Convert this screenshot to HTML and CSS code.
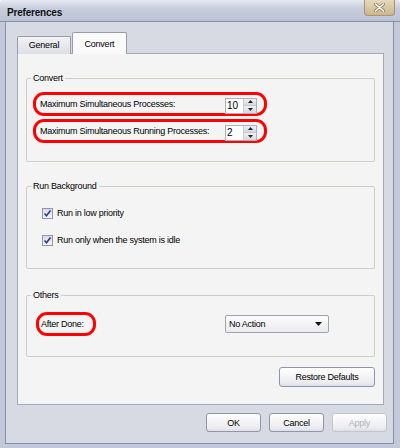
FILE: index.html
```html
<!DOCTYPE html>
<html lang="en">
<head>
    <meta charset="UTF-8">
    <title>Preferences</title>
    <link rel="stylesheet" href="styles.css">
</head>
<body>
    <div class="window">
        <div class="titlebar">
            <span class="title">Preferences</span>
            <button class="close-button">
                <svg width="11" height="9" viewBox="0 0 11 9">
                    <path d="M1.5 1 L9.5 8 M9.5 1 L1.5 8" stroke="#8a7650" stroke-width="3" stroke-linecap="round"/>
                    <path d="M1.5 1 L9.5 8 M9.5 1 L1.5 8" stroke="#ffffff" stroke-width="1.6" stroke-linecap="round"/>
                </svg>
            </button>
        </div>
        <div class="client">
            <div class="tabs">
                <div class="tab">General</div>
                <div class="tab active">Convert</div>
            </div>
            <div class="panel">
                <fieldset class="group group-convert">
                    <legend>Convert</legend>
                    <div class="marked-row">
                        <span>Maximum Simultaneous Processes:</span>
                        <div class="spinner">
                            <span class="spinner-value">10</span>
                            <div class="spinner-buttons">
                                <span class="spin-up"><svg width="5" height="3" viewBox="0 0 5 3"><path d="M0 3 L2.5 0 L5 3 Z" fill="#222"/></svg></span>
                                <span class="spin-down"><svg width="5" height="3" viewBox="0 0 5 3"><path d="M0 0 L5 0 L2.5 3 Z" fill="#222"/></svg></span>
                            </div>
                        </div>
                    </div>
                    <div class="marked-row second">
                        <span>Maximum Simultaneous Running Processes:</span>
                        <div class="spinner">
                            <span class="spinner-value">2</span>
                            <div class="spinner-buttons">
                                <span class="spin-up"><svg width="5" height="3" viewBox="0 0 5 3"><path d="M0 3 L2.5 0 L5 3 Z" fill="#222"/></svg></span>
                                <span class="spin-down"><svg width="5" height="3" viewBox="0 0 5 3"><path d="M0 0 L5 0 L2.5 3 Z" fill="#222"/></svg></span>
                            </div>
                        </div>
                    </div>
                </fieldset>

                <fieldset class="group group-background">
                    <legend>Run Background</legend>
                    <div class="check-row">
                        <span class="checkbox"><svg width="9" height="9" viewBox="0 0 9 9"><path d="M1.5 4.5 L3.5 6.8 L7.5 1.5" fill="none" stroke="#2a3a9c" stroke-width="1.6"/></svg></span>
                        <span>Run in low priority</span>
                    </div>
                    <div class="check-row">
                        <span class="checkbox"><svg width="9" height="9" viewBox="0 0 9 9"><path d="M1.5 4.5 L3.5 6.8 L7.5 1.5" fill="none" stroke="#2a3a9c" stroke-width="1.6"/></svg></span>
                        <span>Run only when the system is idle</span>
                    </div>
                </fieldset>

                <fieldset class="group group-others">
                    <legend>Others</legend>
                    <div class="others-row">
                        <span class="marked-label">After Done:</span>
                        <div class="dropdown">
                            <span>No Action</span>
                            <svg width="7" height="4" viewBox="0 0 7 4"><path d="M0 0 L7 0 L3.5 4 Z" fill="#111"/></svg>
                        </div>
                    </div>
                </fieldset>

                <div class="restore-row">
                    <button class="btn btn-restore">Restore Defaults</button>
                </div>
            </div>
            <div class="footer">
                <button class="btn">OK</button>
                <button class="btn">Cancel</button>
                <button class="btn disabled">Apply</button>
            </div>
        </div>
    </div>
</body>
</html>
```

FILE: styles.css
```css
* {
    box-sizing: border-box;
}
body {
    margin: 0;
    background: #ffffff;
    font-family: "Liberation Sans", Arial, sans-serif;
    font-size: 9px;
    letter-spacing: -0.25px;
    color: #000;
    white-space: nowrap;
}
.window {
    width: 400px;
    height: 448px;
    display: flex;
    flex-direction: column;
    background: #c3c9d9;
    border-radius: 4px 4px 0 0;
    overflow: hidden;
}
.titlebar {
    height: 22px;
    display: flex;
    justify-content: space-between;
    align-items: flex-start;
    background: linear-gradient(#e6e9f1, #c7cddc 40%, #bcc3d5);
    border-bottom: 1px solid #8990a6;
    padding-left: 7px;
}
.title {
    font-weight: bold;
    font-size: 10px;
    letter-spacing: -0.2px;
    line-height: 20px;
    padding-top: 3px;
    color: #111;
}
.close-button {
    width: 31px;
    height: 16px;
    margin-right: 5px;
    padding: 0;
    border: 1px solid #a89470;
    border-top: none;
    border-radius: 0 0 4px 4px;
    background: linear-gradient(#e4d9bf, #cbb68c);
    display: flex;
    align-items: center;
    justify-content: center;
}
.client {
    flex: 1;
    margin: 0 6px 4px 5px;
    border: 1px solid #8990a6;
    border-top: none;
    background: #d8dae3;
    padding: 10px 9px 0 11px;
}
.tabs {
    display: flex;
    align-items: flex-end;
    height: 22px;
    margin-bottom: -1px;
    position: relative;
}
.tab {
    width: 54px;
    height: 18px;
    margin-right: 1px;
    border: 1px solid #959cac;
    border-bottom: none;
    border-radius: 2px 2px 0 0;
    background: linear-gradient(#f3f3f6, #dcdee5);
    text-align: center;
    line-height: 17px;
}
.tab.active {
    width: 55px;
    height: 22px;
    background: #fafafa;
    line-height: 22px;
}
.panel {
    height: 352px;
    border: 1px solid #a2a9b7;
    background: #f4f4f4;
    padding: 18px 8px 0 8px;
}
.group {
    margin: 0;
    border: 1px solid #cfcfc6;
    border-radius: 2px;
    padding: 8px 6px 18px 6px;
}
.group legend {
    padding: 0 2px;
    margin-left: -2px;
    line-height: 12px;
}
.marked-row {
    width: 234px;
    height: 24px;
    border: 3px solid #ff0000;
    border-radius: 11px;
    display: flex;
    align-items: center;
    justify-content: space-between;
    padding: 0 7px 0 4px;
}
.marked-row.second {
    margin-top: 3px;
}
.spinner {
    display: flex;
    width: 32px;
    height: 16px;
    margin-top: 3px;
    border: 1px solid #a9b1c0;
    background: #fff;
}
.spinner-value {
    flex: 1;
    line-height: 14px;
    padding-left: 1px;
    font-size: 10px;
    letter-spacing: 0;
}
.spinner-buttons {
    width: 13px;
    display: flex;
    flex-direction: column;
    border-left: 1px solid #c9ccd4;
}
.spin-up, .spin-down {
    flex: 1;
    display: flex;
    align-items: center;
    justify-content: center;
    background: linear-gradient(#eef0f4, #d5d8df);
}
.spin-up {
    border-bottom: 1px solid #c4c7cf;
}
.group-background {
    margin-top: 18px;
    padding: 15px 6px 22px 6px;
}
.check-row {
    display: flex;
    align-items: center;
    height: 12px;
    padding-left: 9px;
    gap: 4px;
}
.check-row + .check-row {
    margin-top: 15px;
}
.checkbox {
    width: 11px;
    height: 11px;
    border: 1px solid #8e97aa;
    background: linear-gradient(#d9dae2, #f6f6f8);
    display: flex;
    align-items: center;
    justify-content: center;
}
.group-others {
    margin-top: 20px;
    padding: 11px 6px 20px 6px;
}
.others-row {
    display: flex;
    align-items: center;
}
.marked-label {
    width: 60px;
    height: 24px;
    margin-left: 3px;
    border: 3px solid #ff0000;
    border-radius: 11px;
    padding-left: 2px;
    line-height: 18px;
}
.dropdown {
    width: 104px;
    height: 18px;
    margin-left: 129px;
    border: 1px solid #9ca3b2;
    border-radius: 2px;
    background: linear-gradient(#fdfdfd, #eaeaee);
    display: flex;
    align-items: center;
    justify-content: space-between;
    padding: 0 6px 0 3px;
}
.restore-row {
    display: flex;
    justify-content: flex-end;
    margin-top: 10px;
}
.btn {
    width: 55px;
    height: 19px;
    padding: 0;
    border: 1px solid #8e97a8;
    border-radius: 3px;
    background: linear-gradient(#ffffff, #ececf0 80%, #dedfe5);
    font-family: inherit;
    font-size: 9px;
    letter-spacing: -0.25px;
    color: #000;
}
.btn-restore {
    width: 96px;
    height: 20px;
}
.btn.disabled {
    color: #aeb1b8;
    border-color: #c1c5ce;
}
.footer {
    display: flex;
    justify-content: flex-end;
    gap: 8px;
    margin-top: 8px;
    margin-right: -3px;
}
```
